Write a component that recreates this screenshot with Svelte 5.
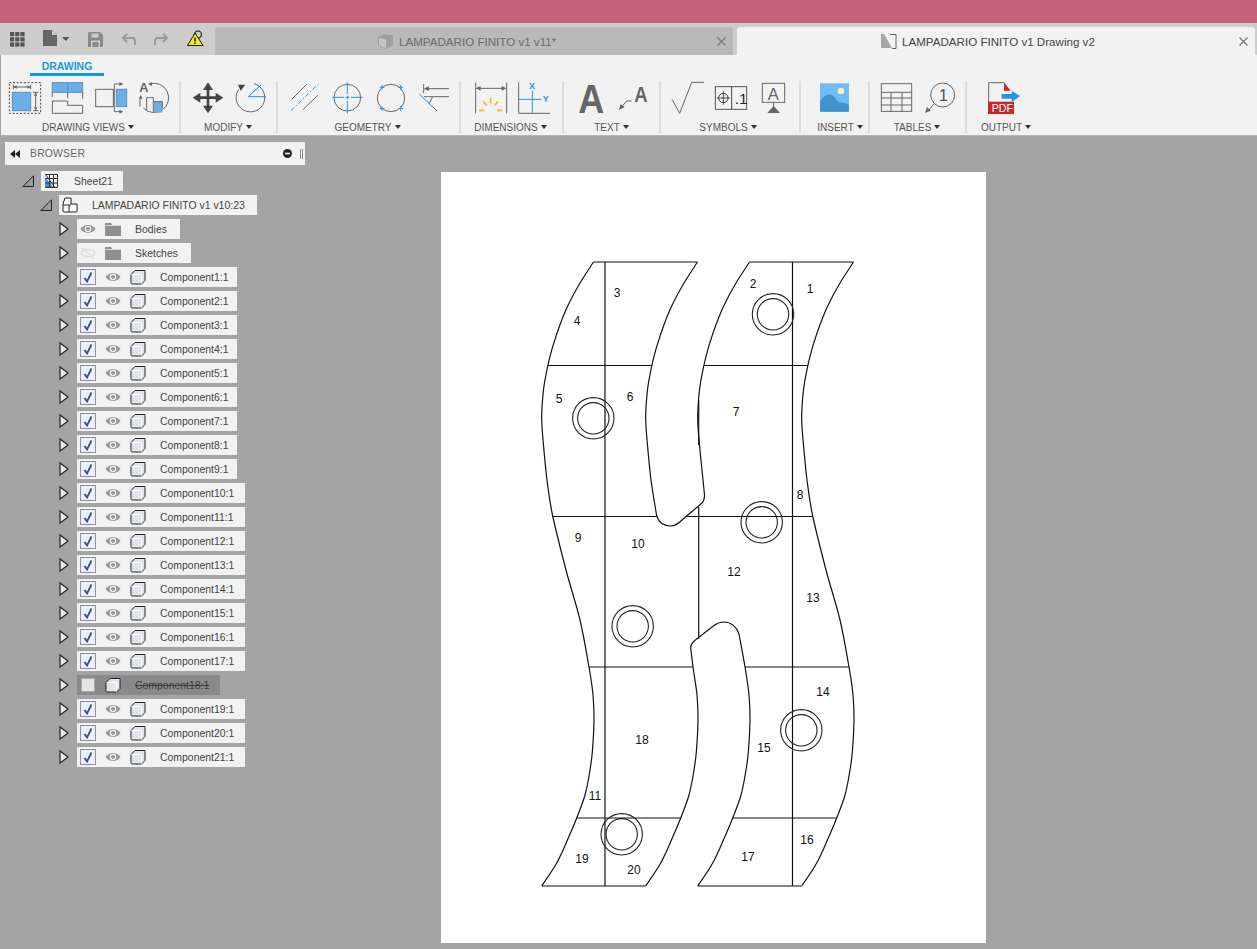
<script>
  const base = [[593.5,262],[580,283],[568.3,304.7],[560,324.7],[553.3,344.7],[548,365],[543.5,390],[541.7,418],[543.5,445],[547,480],[552.7,516],[566,570],[580,620],[589,667],[593,695],[594,720],[592.5,750],[590,770],[585,795],[576.7,818],[568.3,838],[556.7,863],[541.7,886]];
  function curve(pts, move = true) {
    let d = move ? `M${pts[0][0]} ${pts[0][1]}` : '';
    for (let i = 0; i < pts.length - 1; i++) {
      const p0 = pts[Math.max(i - 1, 0)], p1 = pts[i], p2 = pts[i + 1], p3 = pts[Math.min(i + 2, pts.length - 1)];
      const c1 = [p1[0] + (p2[0] - p0[0]) / 6, p1[1] + (p2[1] - p0[1]) / 6];
      const c2 = [p2[0] - (p3[0] - p1[0]) / 6, p2[1] - (p3[1] - p1[1]) / 6];
      d += `C${c1[0].toFixed(1)} ${c1[1].toFixed(1)} ${c2[0].toFixed(1)} ${c2[1].toFixed(1)} ${p2[0].toFixed(1)} ${p2[1]}`;
    }
    return d;
  }
  const shift = (pts, dx) => pts.map(([x, y]) => [x + dx, y]);
  const upper = base.slice(0, 11);
  const lower = base.slice(13);
  const outline = [
    curve(base),
    curve(shift(base, 260)),
    curve(shift(upper, 104)) + 'C659 523 665 526 671 526C676 526 679 523 682 520L702 503C704 501 704.5 498 704.5 495',
    curve([...shift(upper.slice(0, 10), 156), [704.5, 495]]),
    curve([[690.7, 648], ...shift(lower, 104)]),
    'M690.7 648C690.4 645 692 642.5 696 639.5L714 625.5C718 622.5 721 622 724 622C731 622 737 627 739 634',
    curve([[739, 634], ...shift(lower, 156)]),
    'M593.5 262H697.5M749.5 262H853.5M541.7 886H645.7M697.7 886H801.7',
    'M605 262V886M792.5 262V886M698.7 400V445M698.7 507V639',
    'M548 365.5H652M704 365.5H808M552.7 516.5H657M686 516.5H812.7M589 667H693M745 667H849M576.7 818H681M733 818H836.7'
  ];
  const holes = [[773,314.3],[593.3,418.3],[761.7,522.3],[632.7,626.3],[801.3,730.3],[621.7,834.3]];
  const labels = [[1,810,289],[2,753,284],[3,617,293],[4,577,321],[5,559,399],[6,630,397],[7,736,412],[8,800,495],[9,578,538],[10,638,544],[11,595,796],[12,734,572],[13,813,598],[14,823,692],[15,764,748],[16,807,840],[17,748,857],[18,642,740],[19,582,859],[20,634,870]];
  const components = Array.from({ length: 21 }, (_, i) => ({ name: `Component${i + 1}:1`, off: i === 17, wide: i >= 9 }));
</script>

{#snippet arrow()}
  <svg class="tw" width="10" height="14" viewBox="0 0 10 14"><path d="M1 1L9 7L1 13Z" fill="#ececec" stroke="#222" stroke-width="1.2"/></svg>
{/snippet}
{#snippet open()}
  <svg class="tw" width="12" height="12" viewBox="0 0 12 12"><path d="M11.5 .8V11.5H.8Z" fill="#9c9c9c" stroke="#222" stroke-width="1"/></svg>
{/snippet}
{#snippet eye(hidden)}
  <svg class="eye" width="16" height="12" viewBox="0 0 16 12">
    {#if hidden}
      <path d="M.5 6C4 1 12 1 15.5 6C12 11 4 11 .5 6ZM2 1L14 11" fill="none" stroke="#dcdcdc" stroke-width="1.4"/>
    {:else}
      <path d="M.5 6C4 .8 12 .8 15.5 6C12 11.2 4 11.2 .5 6Z" fill="#9a9a9a"/>
      <circle cx="8" cy="6" r="3.2" fill="#f2f2f2"/><circle cx="8" cy="6" r="2" fill="#9a9a9a"/>
    {/if}
  </svg>
{/snippet}
{#snippet folder()}
  <svg class="fold" width="16" height="14" viewBox="0 0 16 14"><path d="M0 1H6L7.5 3H16V14H0Z" fill="#8f8f8f"/><path d="M0 3.5H16" stroke="#e6e6e6" stroke-width=".8"/></svg>
{/snippet}
{#snippet cube()}
  <svg class="cube" width="16" height="16" viewBox="0 0 16 16">
    <path d="M1 5.5L5 1.5H15V11.5L11.5 15H2.5Q1 15 1 13.5Z" fill="#e3e6ec" stroke="#222" stroke-width="1"/>
    <path d="M1.5 5.5H11.5V14.5" fill="none" stroke="#fff" stroke-width="1"/>
  </svg>
{/snippet}

<div class="app">
  <div class="title"></div>

  <div class="tabbar">
    <div class="qat">
      <svg class="q-grid" width="15" height="15" viewBox="0 0 15 15" fill="#555">
        {#each [0, 5.2, 10.4] as y}{#each [0, 5.2, 10.4] as x}<rect x={x} y={y} width="4.2" height="4.2"/>{/each}{/each}
      </svg>
      <svg class="q-file" width="27" height="17" viewBox="0 0 27 17" fill="#666"><path d="M0 0H9L14 5V16H0Z"/><path d="M9 0V5H14" fill="#ccc"/><path d="M19 7H26.500L22.750 11Z" fill="#555"/></svg>
      <svg class="q-save" width="15" height="15" viewBox="0 0 15 15"><path d="M1 0H12L15 3V14Q15 15 14 15H1Q0 15 0 14V1Q0 0 1 0Z" fill="#8a8a8a"/><rect x="3.500" y="1.500" width="7" height="4" fill="#ccc"/><rect x="3" y="8.500" width="9" height="6.500" fill="#ccc"/><rect x="4.500" y="10" width="6" height="5" fill="#8a8a8a"/></svg>
      <svg class="q-undo" width="15" height="13" viewBox="0 0 15 13" fill="none" stroke="#999" stroke-width="2"><path d="M14 12V8Q14 5 11 5H2M6 1L2 5L6 9"/></svg>
      <svg class="q-redo" width="15" height="13" viewBox="0 0 15 13" fill="none" stroke="#999" stroke-width="2"><path d="M1 12V8Q1 5 4 5H13M9 1L13 5L9 9"/></svg>
      <svg class="q-warn" width="17" height="17" viewBox="0 0 17 17"><circle cx="11" cy="4.500" r="3.500" fill="none" stroke="#444" stroke-width="1.500"/><path d="M8 3L16 15.500H.5Z" fill="#f4ee1c" stroke="#111" stroke-width="1"/><path d="M8 7.500V11.500M8 12.500V14" stroke="#111" stroke-width="1.500"/></svg>
    </div>
    <div class="tab inactive">
      <svg width="16" height="15" viewBox="0 0 16 15"><path d="M0 3L6 0L15 1.500V11L8 15L0 12Z" fill="#a0a0a0"/><path d="M1 4L8 5.500V14L1 11.500Z" fill="#c4c4c4"/></svg>
      <span class="t-name">LAMPADARIO FINITO v1 v11*</span>
      <svg class="x" width="9" height="9" viewBox="0 0 9 9"><path d="M.5 .5L8.500 8.500M8.500 .5L.5 8.500" stroke="#7a7a7a" stroke-width="1.300"/></svg>
    </div>
    <div class="tab active">
      <svg width="16" height="15" viewBox="0 0 16 15"><path d="M0 0L11 0V14H0Z" fill="#a6a6a6"/><path d="M3 0L11 14V0Z" fill="#f2f2f2"/><path d="M9 .5H15M15 .5V14.500M11 14.500H15" fill="none" stroke="#555" stroke-width=".9"/></svg>
      <span class="t-name">LAMPADARIO FINITO v1 Drawing v2</span>
      <svg class="x" width="9" height="9" viewBox="0 0 9 9"><path d="M.5 .5L8.500 8.500M8.500 .5L.5 8.500" stroke="#7a7a7a" stroke-width="1.300"/></svg>
    </div>
  </div>

  <div class="toolbar">
    <div class="tb-tabs"><span class="tb-tab">DRAWING</span></div>
    <div class="groups">
      <div class="group g1">
        <div class="icons">
          <svg class="ico" viewBox="21 243 108 108" fill="none">
            <rect x="28" y="248" width="94" height="92" stroke="#444" stroke-width="3" stroke-dasharray="6 5"/>
            <rect x="37" y="277" width="55" height="55" fill="#6ab0e6" stroke="#4f94c8" stroke-width="3"/>
            <path d="M40 254V268M92 254V268M40 261H92M99 277H115M99 332H115M107 277V332" stroke="#666" stroke-width="3"/>
            <path d="M40 261L50 256V266ZM92 261L82 256V266ZM107 277L102 287H112ZM107 332L102 322H112Z" fill="#666"/>
          </svg>
          <svg class="ico" viewBox="153 243 108 108" fill="none">
            <rect x="157" y="248" width="91" height="29" fill="#6ab0e6" stroke="#4f94c8" stroke-width="3"/>
            <path d="M203 248V277" stroke="#4f94c8" stroke-width="3"/>
            <path d="M157 277V291M157 303V340H248V316M248 277V296M157 303H203V316H248M203 277V295" stroke="#666" stroke-width="3"/>
          </svg>
          <svg class="ico" viewBox="285 243 108 108" fill="none">
            <rect x="287" y="268" width="53" height="52" stroke="#666" stroke-width="3"/>
            <rect x="349" y="268" width="31" height="52" fill="#6ab0e6" stroke="#4f94c8" stroke-width="3"/>
            <path d="M343 252V335M343 252H360M343 335H360" stroke="#666" stroke-width="3"/>
            <path d="M370 252L358 246V258ZM370 335L358 329V341Z" fill="#666"/>
          </svg>
          <svg class="ico" viewBox="417 243 108 108" fill="none">
            <path d="M448 252A44 44 0 1 1 430 324" stroke="#666" stroke-width="3"/>
            <rect x="462" y="305" width="25" height="33" fill="#6ab0e6"/>
            <path d="M440 332V293H460V338M462 305H487V325" stroke="#666" stroke-width="3"/>
            <path d="M420 296V320" stroke="#666" stroke-width="3"/>
            <path d="M444 252L456 246V258ZM422 285L416 296H428Z" fill="#666"/>
            <text x="418" y="275" class="svgb" font-size="38" fill="#666">A</text>
          </svg>
        </div>
        <div class="lbl">DRAWING VIEWS<i></i></div>
      </div>

      <div class="group g2">
        <div class="icons">
          <svg class="ico" viewBox="570 243 108 108" fill="#444">
            <path d="M624 262V324M593 293H655" stroke="#444" stroke-width="8"/>
            <path d="M624 247L609 270H639ZM624 340L609 317H639ZM578 293L601 278V308ZM670 293L647 278V308Z"/>
          </svg>
          <svg class="ico" viewBox="702 243 108 108" fill="none">
            <path d="M762 251A43 43 0 1 1 716 268" stroke="#666" stroke-width="3"/>
            <path d="M714 254L736 254L722 272Z" fill="#444"/>
            <path d="M782 256L745 290H798" stroke="#2196e8" stroke-width="3"/>
          </svg>
        </div>
        <div class="lbl">MODIFY<i></i></div>
      </div>

      <div class="group g3">
        <div class="icons">
          <svg class="ico" viewBox="858 243 108 108" fill="none">
            <path d="M876 297L920 253M908 330L953 286" stroke="#666" stroke-width="3"/>
            <path d="M873 332L955 252" stroke="#2196e8" stroke-width="3" stroke-dasharray="14 6 4 6"/>
          </svg>
          <svg class="ico" viewBox="990 243 108 108" fill="none">
            <circle cx="1042" cy="293" r="40" stroke="#666" stroke-width="3"/>
            <path d="M997 292H1032M1037 292H1048M1053 292H1088M1042 247V282M1042 287V298M1042 303V340" stroke="#2196e8" stroke-width="3"/>
          </svg>
          <svg class="ico" viewBox="1122 243 108 108" fill="none">
            <circle cx="1173" cy="294" r="41" stroke="#666" stroke-width="3"/>
            <path d="M1139 262H1153M1146 255V269M1195 262H1209M1202 255V269M1139 326H1153M1146 319V333M1195 326H1209M1202 319V333" stroke="#2196e8" stroke-width="3"/>
          </svg>
          <svg class="ico" viewBox="1254 243 108 108" fill="none">
            <path d="M1271 252V280M1285 266H1347M1272 290H1347M1298 290L1288 310M1296 318L1311 333" stroke="#666" stroke-width="3"/>
            <path d="M1271 266L1287 259V273Z" fill="#666"/>
            <path d="M1258 282L1296 319" stroke="#2196e8" stroke-width="3"/>
          </svg>
        </div>
        <div class="lbl">GEOMETRY<i></i></div>
      </div>

      <div class="group g4">
        <div class="icons">
          <svg class="ico" viewBox="1419 243 108 108" fill="none">
            <path d="M1427 247V340M1520 247V340M1430 265H1517" stroke="#666" stroke-width="3"/>
            <path d="M1428 265L1442 258V272ZM1519 265L1505 258V272Z" fill="#666"/>
            <path d="M1472 294V310M1450 305L1460 316M1494 305L1484 316M1437 331H1453M1491 331H1507" stroke="#fdb515" stroke-width="5"/>
          </svg>
          <svg class="ico" viewBox="1551 243 108 108" fill="none">
            <path d="M1556 247V340H1650" stroke="#666" stroke-width="3"/>
            <path d="M1597 272V340M1556 298H1624" stroke="#2196e8" stroke-width="3"/>
            <text x="1587" y="267" class="svgb" font-size="27" fill="#2196e8">X</text>
            <text x="1628" y="307" class="svgb" font-size="27" fill="#2196e8">Y</text>
          </svg>
        </div>
        <div class="lbl">DIMENSIONS<i></i></div>
      </div>

      <div class="group g5">
        <div class="icons">
          <svg class="ico" viewBox="1719 243 108 108">
            <text x="1735" y="338" class="svgb" font-size="124" fill="#666" textLength="78" lengthAdjust="spacingAndGlyphs">A</text>
          </svg>
          <svg class="ico" viewBox="1851 243 108 108" fill="none">
            <text x="1903" y="305" class="svgb" font-size="65" fill="#666" stroke="none" textLength="40" lengthAdjust="spacingAndGlyphs">A</text>
            <path d="M1895 303H1880L1862 324" stroke="#666" stroke-width="3"/>
            <path d="M1857 329L1862 312L1874 322Z" fill="#666"/>
          </svg>
        </div>
        <div class="lbl">TEXT<i></i></div>
      </div>

      <div class="group g6">
        <div class="icons">
          <svg class="ico" viewBox="2010 243 108 108" fill="none">
            <path d="M2016 298L2039 340L2075 247H2112" stroke="#666" stroke-width="3"/>
          </svg>
          <svg class="ico" viewBox="2142 243 108 108" fill="none">
            <rect x="2146" y="260" width="94" height="68" stroke="#555" stroke-width="3"/>
            <path d="M2195 260V328M2150 294H2190M2170 274V314" stroke="#444" stroke-width="3"/>
            <circle cx="2170" cy="294" r="14" stroke="#444" stroke-width="3"/>
            <text x="2204" y="312" class="svgr" font-size="46" fill="#222">.1</text>
          </svg>
          <svg class="ico" viewBox="2274 243 108 108" fill="none">
            <rect x="2287" y="250" width="67" height="57" stroke="#666" stroke-width="3"/>
            <text x="2303" y="301" class="svgr" font-size="50" fill="#666">A</text>
            <path d="M2321 307V322" stroke="#666" stroke-width="3"/>
            <path d="M2321 318L2340 339H2302Z" fill="#666"/>
          </svg>
        </div>
        <div class="lbl">SYMBOLS<i></i></div>
      </div>

      <div class="group g7">
        <div class="icons">
          <svg class="ico" viewBox="2451 243 108 108">
            <rect x="2460" y="250" width="87" height="85" fill="#6cbdf8"/>
            <path d="M2460 335V305C2475 280 2495 275 2510 300C2520 312 2530 305 2547 315V335Z" fill="#3f94cd"/>
            <circle cx="2523" cy="273" r="10" fill="#fbeeb5"/>
          </svg>
        </div>
        <div class="lbl">INSERT<i></i></div>
      </div>

      <div class="group g8">
        <div class="icons">
          <svg class="ico" viewBox="2637 243 108 108" fill="none">
            <rect x="2644" y="251" width="91" height="83" stroke="#666" stroke-width="3"/>
            <path d="M2644 277H2735M2644 294H2735M2644 315H2735M2673 277V334M2706 277V334" stroke="#666" stroke-width="3"/>
          </svg>
          <svg class="ico" viewBox="2769 243 108 108" fill="none">
            <circle cx="2828" cy="285" r="36" stroke="#666" stroke-width="3"/>
            <text x="2816" y="303" class="svgr" font-size="50" fill="#555">1</text>
            <path d="M2803 311L2785 332" stroke="#666" stroke-width="3"/>
            <path d="M2775 339L2781 321L2793 332Z" fill="#666"/>
          </svg>
        </div>
        <div class="lbl">TABLES<i></i></div>
      </div>

      <div class="group g9">
        <div class="icons">
          <svg class="ico" viewBox="2958 243 108 108" fill="none">
            <path d="M2966 306V248H3012" stroke="#666" stroke-width="3"/>
            <path d="M3012 247L3032 272H3012Z" fill="#c9262c"/>
            <rect x="2964" y="305" width="78" height="37" fill="#c9262c"/>
            <text x="2975" y="336" class="svgr" font-size="32" fill="#fff">PDF</text>
            <path d="M3005 282H3035V272L3060 288L3035 306V296H3005Z" fill="#2196e8"/>
          </svg>
        </div>
        <div class="lbl">OUTPUT<i></i></div>
      </div>
    </div>
  </div>

  <div class="main">
    <aside class="side">
      <div class="browser">
        <svg class="b-back" width="10" height="8" viewBox="0 0 10 8" fill="#222"><path d="M5 0V8L0 4ZM10 0V8L5 4Z"/></svg>
        <span class="b-title">BROWSER</span>
        <svg class="b-min" width="9" height="9" viewBox="0 0 9 9"><circle cx="4.500" cy="4.500" r="4.500" fill="#222"/><rect x="2" y="3.700" width="5" height="1.600" fill="#f2f2f2"/></svg>
        <svg class="b-grip" width="3" height="10" viewBox="0 0 3 10"><path d="M.5 0V10M2.500 0V10" stroke="#777" stroke-width=".8"/></svg>
      </div>

      <div class="tree">
        <div class="row d0">
          {@render open()}
          <div class="chip c-sheet">
            <svg width="13" height="14" viewBox="0 0 13 14" fill="none"><path d="M0 3L9 14H0Z" fill="#3f8fe0"/><path d="M.5 .5H12.500V13.500H.5M4.500 .5V13.500M8.500 .5V13.500M.5 4.500H12.500M.5 9H12.500M.5 .5L10 13.500" stroke="#333" stroke-width="1"/></svg>
            <span>Sheet21</span>
          </div>
        </div>
        <div class="row d1">
          {@render open()}
          <div class="chip c-asm">
            <svg width="16" height="16" viewBox="0 0 16 16" fill="#fff" stroke="#222" stroke-width="1"><path d="M1 14V7L3 1H9V7H15V14Q15 15 14 15H2Q1 15 1 14Z"/><path d="M1 8H9M7 8V15" fill="none"/></svg>
            <span>LAMPADARIO FINITO v1 v10:23</span>
          </div>
        </div>
        <div class="row d2">
          {@render arrow()}
          <div class="chip c-folder">{@render eye(false)}{@render folder()}<span>Bodies</span></div>
        </div>
        <div class="row d2">
          {@render arrow()}
          <div class="chip c-folder">{@render eye(true)}{@render folder()}<span>Sketches</span></div>
        </div>
        {#each components as c}
          <div class="row d2">
            {@render arrow()}
            {#if c.off}
              <div class="chip c-off">
                <span class="cb off"></span>
                {@render cube()}
                <s>{c.name}</s>
              </div>
            {:else}
              <div class="chip c-comp" class:wide={c.wide}>
                <span class="cb">
                  <svg width="10" height="11" viewBox="0 0 10 11" fill="none"><path d="M1.500 6L4 9.500L8.500 .5" stroke="#34508f" stroke-width="1.800"/></svg>
                </span>
                {@render eye(false)}
                {@render cube()}
                <span>{c.name}</span>
              </div>
            {/if}
          </div>
        {/each}
      </div>
    </aside>

    <div class="sheet">
      <svg width="545" height="771" viewBox="441 172 545 771" fill="none">
        {#each outline as d}<path d={d} stroke="#111" stroke-width="1.200"/>{/each}
        {#each holes as [cx, cy]}
          <circle cx={cx} cy={cy} r="20.700" fill="none" stroke="#222" stroke-width="1.100"/>
          <circle cx={cx} cy={cy} r="15.700" fill="none" stroke="#222" stroke-width="1.100"/>
        {/each}
        {#each labels as [n, x, y]}
          <text x={x} y={y} class="num" text-anchor="middle" dominant-baseline="central">{n}</text>
        {/each}
      </svg>
    </div>
  </div>
</div>

<style>
  :global(body) { background: #a4a4a4; overflow: hidden; }
  .app { width: 1257px; height: 949px; overflow: hidden; display: flex; flex-direction: column; font-family: "Liberation Sans", Arial, sans-serif; background: #a4a4a4; }
  .title { height: 23px; background: #c46277; }

  .tabbar { height: 32px; background: #cdcdcd; display: flex; align-items: flex-end; }
  .qat { width: 215px; height: 32px; flex: none; display: flex; align-items: center; position: relative; }
  .q-grid { margin-left: 10px; }
  .q-file { margin-left: 18px; margin-top: -1px; }
  .q-save { margin-left: 18px; }
  .q-undo { margin-left: 18px; }
  .q-redo { margin-left: 18px; }
  .q-warn { margin-left: 18px; margin-top: -1px; }
  .tab { height: 28px; display: flex; align-items: center; border-radius: 4px 4px 0 0; font-size: 11.6px; box-sizing: border-box; }
  .tab .t-name { margin-left: 5px; flex: 1; }
  .tab .x { margin-right: 7px; }
  .inactive { width: 518px; background: #b9b9b9; color: #6a6a6a; padding-left: 163px; margin-right: 4px; }
  .active { width: 518px; background: #f2f2f2; color: #444; padding-left: 144px; }

  .toolbar { height: 81px; background: #f2f2f2; display: flex; flex-direction: column; box-sizing: border-box; border-bottom: 1px solid #b4b4b4; margin-left: 1px; }
  .tb-tabs { height: 26px; padding-left: 29px; box-sizing: border-box; flex: none; }
  .tb-tab { display: block; width: 74px; height: 18px; line-height: 22px; text-align: center; font-size: 10.5px; font-weight: 700; color: #1c9ad6; border-bottom: 3px solid #1696dd; box-sizing: content-box; }
  .groups { display: flex; height: 52px; }
  .group { box-sizing: border-box; height: 52px; display: flex; flex-direction: column; border-right: 2px solid #dcdcdc; flex: none; }
  .icons { display: flex; gap: 8px; height: 41px; flex: none; }
  .ico { width: 36px; height: 36px; flex: none; overflow: visible; }
  .svgb { font-family: "Liberation Sans", Arial, sans-serif; font-weight: 700; }
  .svgr { font-family: "Liberation Sans", Arial, sans-serif; font-weight: 400; }
  .lbl { height: 12px; line-height: 12px; font-size: 10px; color: #555; text-align: center; display: flex; justify-content: center; align-items: center; padding-right: 10px; white-space: nowrap; }
  .lbl i { width: 0; height: 0; margin-left: 3px; margin-top: -2px; border-left: 3px solid transparent; border-right: 3px solid transparent; border-top: 4px solid #333; }
  .g1 { width: 180px; padding-left: 6px; }
  .g2 { width: 97px; padding-left: 9px; }
  .g3 { width: 183px; padding-left: 8px; }
  .g4 { width: 103px; padding-left: 12px; }
  .g4 .lbl { padding-right: 14px; }
  .g5 { width: 97px; padding-left: 9px; }
  .g5 .lbl { padding-right: 9px; }
  .g6 { width: 140px; padding-left: 9px; }
  .g6 .lbl { padding-right: 13px; }
  .g7 { width: 69px; padding-left: 16px; }
  .g7 .lbl { padding-right: 5px; }
  .g8 { width: 97px; padding-left: 9px; }
  .g9 { width: 75px; padding-left: 19px; border-right: none; }
  .g9 .lbl { padding-right: 16px; }

  .main { flex: 1; display: flex; align-items: flex-start; }
  .side { width: 441px; flex: none; padding: 6px 0 0 5px; box-sizing: border-box; }
  .browser { width: 300px; height: 23px; background: #f2f2f2; display: flex; align-items: center; font-size: 10.4px; color: #666; box-sizing: border-box; padding-left: 5px; letter-spacing: .2px; }
  .b-title { margin-left: 10px; flex: 1; }
  .b-min { margin-right: 8px; }
  .b-grip { margin-right: 2px; }

  .tree { margin-top: 6px; margin-left: 17px; display: flex; flex-direction: column; gap: 4px; }
  .row { display: flex; align-items: center; height: 20px; position: relative; }
  .d1 { margin-left: 18px; }
  .d2 { margin-left: 37px; }
  .row .tw { flex: none; width: 10px; margin-right: 8px; }
  .d0 .tw, .d1 .tw { width: 12px; margin-right: 7px; margin-left: 0; }
  .chip { height: 20px; display: flex; align-items: center; background: #f2f2f2; font-size: 10.45px; color: #444; box-sizing: border-box; white-space: nowrap; flex: none; }
  .c-sheet { width: 82px; padding-left: 4px; }
  .c-sheet span { margin-left: 16px; }
  .c-asm { width: 198px; padding-left: 3px; }
  .c-asm span { margin-left: 14px; }
  .c-folder { padding: 0 13px 0 3px; }
  .c-folder .fold { margin-left: 9px; }
  .c-folder span { margin-left: 14px; }
  .c-comp { width: 160px; padding-left: 3px; }
  .c-comp.wide { width: 168px; }
  .c-comp .eye { margin-left: 9px; }
  .c-comp .cube { margin-left: 9px; }
  .c-comp > span:last-child { margin-left: 14px; }
  .cb { width: 16px; height: 16px; box-sizing: border-box; border: 1px solid #8d93a3; background: #eef0f3; display: flex; align-items: center; justify-content: center; flex: none; }
  .c-off { background: #8a8a8a; width: 143px; padding-left: 4px; color: #3c3c3c; }
  .c-off .cb.off { width: 14px; height: 14px; background: #e4e4e4; border-color: #aaa; }
  .c-off .cube { margin-left: 10px; }
  .c-off s { margin-left: 14px; }

  .sheet { width: 545px; height: 771px; background: #fff; margin-top: 36px; flex: none; }
  .sheet svg { display: block; }
  .num { font-family: "Liberation Sans", Arial, sans-serif; font-size: 12px; fill: #111; }
</style>
